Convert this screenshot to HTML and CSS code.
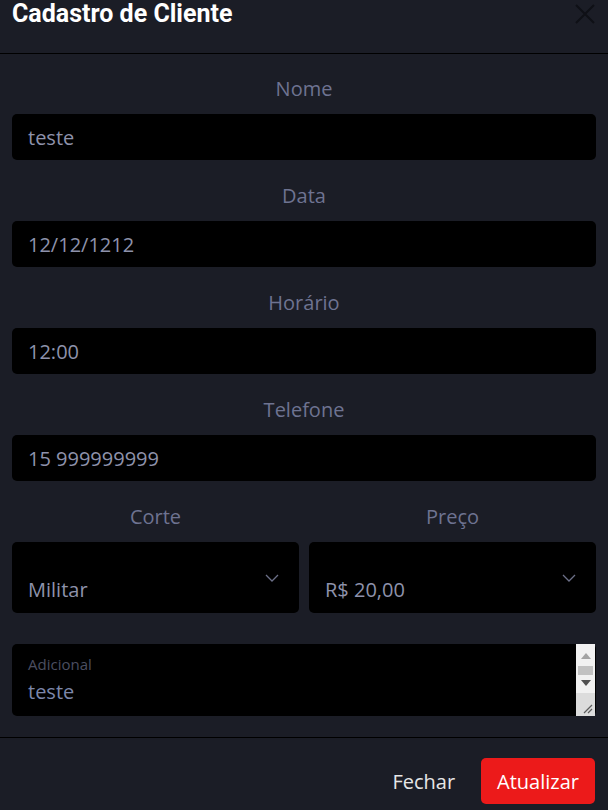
FILE: index.html
```html
<!DOCTYPE html>
<html lang="pt-BR">
<head>
<meta charset="utf-8">
<title>Cadastro de Cliente</title>
<link rel="stylesheet" href="styles.css">
</head>
<body>
<div class="modal">
  <div class="modal-header">
    <h1 class="modal-title">Cadastro de Cliente</h1>
    <button class="close-btn" aria-label="Fechar">
      <svg width="20" height="20" viewBox="0 0 20 20"><path d="M1 1 L19 19 M19 1 L1 19" stroke="#0f1016" stroke-width="2" fill="none"/></svg>
    </button>
  </div>
  <div class="modal-body">
    <div class="field">
      <label class="field-label">Nome</label>
      <div class="input">teste</div>
    </div>
    <div class="field">
      <label class="field-label">Data</label>
      <div class="input">12/12/1212</div>
    </div>
    <div class="field">
      <label class="field-label">Horário</label>
      <div class="input">12:00</div>
    </div>
    <div class="field">
      <label class="field-label">Telefone</label>
      <div class="input">15 999999999</div>
    </div>
    <div class="field row">
      <div class="col">
        <label class="field-label">Corte</label>
        <div class="select"><span class="select-value">Militar</span>
          <svg class="chevron" width="14" height="8" viewBox="0 0 14 8"><path d="M1 1 L7 7 L13 1" stroke="#6c7088" stroke-width="1.3" fill="none"/></svg>
        </div>
      </div>
      <div class="col">
        <label class="field-label">Preço</label>
        <div class="select"><span class="select-value">R$ 20,00</span>
          <svg class="chevron" width="14" height="8" viewBox="0 0 14 8"><path d="M1 1 L7 7 L13 1" stroke="#6c7088" stroke-width="1.3" fill="none"/></svg>
        </div>
      </div>
    </div>
    <div class="floating">
      <textarea class="textarea">teste</textarea>
      <label class="floating-label">Adicional</label>
      <div class="scrollbar" aria-hidden="true">
        <div class="sb-track">
          <span class="arrow-up"></span>
          <span class="thumb"></span>
          <span class="arrow-down"></span>
        </div>
        <div class="resizer">
          <svg width="19" height="23" viewBox="0 0 19 23"><path d="M8 20 L16 12 M12 20 L16 16" stroke="#5c5c5c" stroke-width="1.2" fill="none"/></svg>
        </div>
      </div>
    </div>
  </div>
  <div class="modal-footer">
    <button class="btn btn-link">Fechar</button>
    <button class="btn btn-danger">Atualizar</button>
  </div>
</div>
</body>
</html>
```
FILE: styles.css
```css
* { box-sizing: border-box; }
html, body {
  margin: 0;
  padding: 0;
  background: #1b1d26;
}
body {
  font-family: "Open Sans", "Noto Sans", sans-serif;
  font-size: 20px;
  color: #8e92ab;
}
.modal {
  width: 608px;
}
.modal-header {
  height: 54px;
  border-bottom: 1px solid #000;
  display: flex;
  justify-content: space-between;
  align-items: flex-start;
  padding: 0 12px;
}
.modal-title {
  margin: 0;
  font-family: Roboto, sans-serif;
  font-weight: 700;
  font-size: 25px;
  line-height: 28px;
  color: #ffffff;
}
.close-btn {
  background: none;
  border: 0;
  padding: 0;
  margin-top: 4px;
  margin-right: 1px;
  width: 20px;
  height: 20px;
  display: flex;
}
.modal-body {
  padding: 22px 12px 21px;
  display: flex;
  flex-direction: column;
  gap: 23px;
}
.field-label {
  display: block;
  text-align: center;
  line-height: 26px;
  margin-bottom: 12px;
  color: #6e7391;
}
.input {
  height: 46px;
  background: #000;
  border-radius: 5px;
  padding: 0 16px;
  display: flex;
  align-items: center;
  color: #8e92ab;
}
.row {
  display: grid;
  grid-template-columns: 1fr 1fr;
  gap: 10px;
}
.select {
  height: 71px;
  background: #000;
  border-radius: 5px;
  padding: 0 20px 11px 16px;
  display: flex;
  justify-content: space-between;
  align-items: flex-end;
  color: #8e92ab;
}
.select-value {
  line-height: 24px;
}
.chevron {
  align-self: center;
  margin-bottom: -12px;
}
.floating {
  position: relative;
  margin-top: 8px;
}
.textarea {
  display: block;
  width: 100%;
  height: 72px;
  background: #000;
  border: 0;
  border-radius: 5px;
  padding: 34px 16px 6px;
  font-family: "Open Sans", "Noto Sans", sans-serif;
  font-size: 20px;
  line-height: 28px;
  color: #7c87aa;
  overflow: hidden;
  resize: none;
  outline: none;
}
.floating-label {
  position: absolute;
  top: 10px;
  left: 16px;
  font-size: 15px;
  line-height: 20px;
  color: #4b4e60;
}
.scrollbar {
  position: absolute;
  top: 0;
  right: 1px;
  bottom: 0;
  width: 19px;
  display: flex;
  flex-direction: column;
  background: #f1f1f1;
}
.sb-track {
  height: 49px;
  display: flex;
  flex-direction: column;
  align-items: center;
  padding-top: 9px;
}
.arrow-up {
  width: 0;
  height: 0;
  border-left: 5px solid transparent;
  border-right: 5px solid transparent;
  border-bottom: 6px solid #a3a3a3;
}
.thumb {
  width: 15px;
  height: 9px;
  margin-top: 7px;
  background: #c1c1c1;
}
.arrow-down {
  width: 0;
  height: 0;
  margin-top: 5px;
  border-left: 5px solid transparent;
  border-right: 5px solid transparent;
  border-top: 6px solid #505050;
}
.resizer {
  flex: 1;
  background: #dcdcdc;
  display: flex;
}
.modal-footer {
  border-top: 1px solid #000;
  padding: 20px 13px 20px 12px;
  display: flex;
  justify-content: flex-end;
  gap: 10px;
}
.btn {
  height: 46px;
  padding: 0 16px;
  border: 0;
  border-radius: 5px;
  font-family: "Open Sans", "Noto Sans", sans-serif;
  font-size: 20px;
  background: none;
}
.btn-link {
  color: #e6e6e6;
}
.btn-danger {
  background: #ec1a1a;
  color: #ffffff;
}
```
